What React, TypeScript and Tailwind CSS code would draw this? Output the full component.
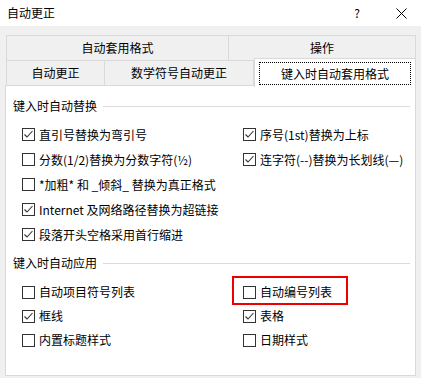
import React from "react";

const font = { fontFamily: '"Noto Sans CJK SC", "Noto Sans", sans-serif' };

function Box({ checked }: { checked: boolean }) {
    return (
        <span className="w-[13px] h-[13px] border border-[#333333] bg-white flex items-center justify-center shrink-0">
            {checked && (
                <svg width="11" height="11" viewBox="0 0 11 11">
                    <path d="M1.5 5.5 L4 8 L9.5 2" fill="none" stroke="#333333" strokeWidth="1.1" />
                </svg>
            )}
        </span>
    );
}

function Check({ label, checked, marked }: { label: string; checked: boolean; marked?: boolean }) {
    return (
        <div className="relative h-[25px] flex items-center gap-[4px] text-[12px] text-black whitespace-nowrap">
            <Box checked={checked} />
            <span>{label}</span>
            {marked && (
                <div className="absolute left-[-11px] top-[-4px] w-[116px] h-[29px] border-2 border-[#ee0000]" />
            )}
        </div>
    );
}

function Group({ title }: { title: string }) {
    return (
        <div className="flex items-center gap-[6px] pl-[7px] pr-[5px] h-[16px] text-[12px] text-black">
            <span className="whitespace-nowrap">{title}</span>
            <div className="flex-1 h-px bg-[#dcdcdc]" />
        </div>
    );
}

export default function App() {
    return (
        <div className="w-[421px] h-[378px] bg-[#f0f0f0] overflow-hidden" style={font}>
            {/* title bar */}
            <div className="h-[26px] bg-white flex items-center text-[12px] text-black">
                <span className="pl-[7px] flex-1">自动更正</span>
                <span className="w-[12px] text-center mr-[33px]">?</span>
                <svg width="11" height="11" viewBox="0 0 11 11" className="mr-[14px]">
                    <path d="M0.5 0.5 L10.5 10.5 M10.5 0.5 L0.5 10.5" stroke="#000" strokeWidth="1" />
                </svg>
            </div>

            {/* tabs */}
            <div className="mt-[9px] ml-[6px] w-[410px] text-[12px] text-black">
                <div className="flex h-[25px] border-t border-l border-[#d9d9d9]">
                    <div className="w-[222px] flex items-center justify-center border-r border-[#d9d9d9]">自动套用格式</div>
                    <div className="flex-1 flex items-center justify-center border-r border-[#d9d9d9]">操作</div>
                </div>
                <div className="flex h-[25px] border-t border-[#d9d9d9]">
                    <div className="w-[99px] flex items-center justify-center border-l border-r border-[#d9d9d9]">自动更正</div>
                    <div className="w-[149px] flex items-center justify-center border-r border-[#d9d9d9]">数学符号自动更正</div>
                    <div className="relative z-10 flex-1 -mt-[3px] h-[29px] bg-white border-t border-r border-l border-[#d9d9d9] px-[4px] pt-[3px] pb-[2px]">
                        <div className="h-full border border-dotted border-black flex items-center justify-center">键入时自动套用格式</div>
                    </div>
                </div>
            </div>

            {/* panel */}
            <div className="ml-[5px] w-[411px] h-[291px] bg-white border border-[#d9d9d9] pt-[12px]">
                <Group title="键入时自动替换" />
                <div className="mt-[8px] pl-[16px] grid grid-cols-[221px_1fr]">
                    <Check label="直引号替换为弯引号" checked />
                    <Check label="序号(1st)替换为上标" checked />
                    <Check label="分数(1/2)替换为分数字符(½)" checked={false} />
                    <Check label="连字符(--)替换为长划线(—)" checked />
                    <Check label="*加粗* 和 _倾斜_ 替换为真正格式" checked={false} />
                    <div />
                    <Check label="Internet 及网络路径替换为超链接" checked />
                    <div />
                    <Check label="段落开头空格采用首行缩进" checked />
                    <div />
                </div>
                <div className="mt-[8px]">
                    <Group title="键入时自动应用" />
                </div>
                <div className="mt-[9px] pl-[16px] grid grid-cols-[221px_1fr] [&>div]:h-[24px]">
                    <Check label="自动项目符号列表" checked={false} />
                    <Check label="自动编号列表" checked={false} marked />
                    <Check label="框线" checked />
                    <Check label="表格" checked />
                    <Check label="内置标题样式" checked={false} />
                    <Check label="日期样式" checked={false} />
                </div>
            </div>
        </div>
    );
}
